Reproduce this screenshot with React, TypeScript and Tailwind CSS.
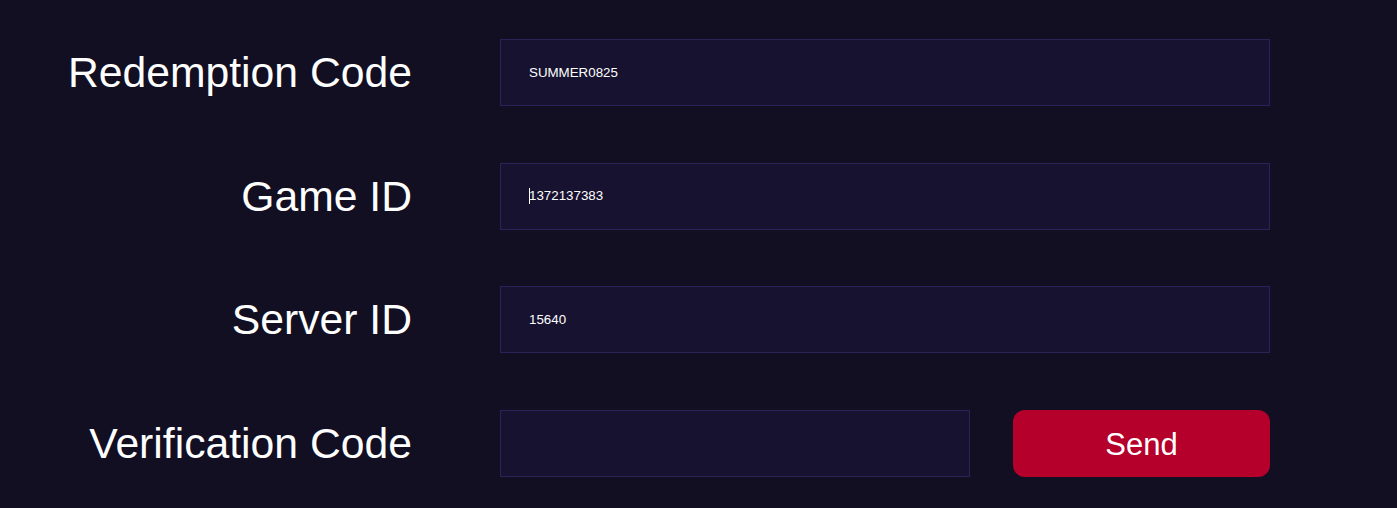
import React from "react";

const rows = [
  { label: "Redemption Code", value: "SUMMER0825" },
  { label: "Game ID", value: "1372137383", caret: true },
  { label: "Server ID", value: "15640" },
];

export default function App() {
  return (
    <div className="w-[1397px] h-[508px] bg-[#120f23] overflow-hidden" style={{ fontFamily: '"Liberation Sans", Arial, sans-serif' }}>
      <div className="pt-[39px] flex flex-col gap-[56.5px]">
        {rows.map((r) => (
          <div key={r.label} className="flex items-center h-[67px]">
            <div className="w-[412px] text-right text-white text-[42.7px] leading-none">{r.label}</div>
            <div className="ml-[88px] w-[770px] h-[67px] bg-[#17122f] border border-[#2a2258] flex items-center pl-[28px] text-white text-[13.33px]">
              {r.caret && <span className="inline-block w-px h-[16px] bg-white mr-[-1px]" />}
              {r.value}
            </div>
          </div>
        ))}
        <div className="flex items-center h-[67px]">
          <div className="w-[412px] text-right text-white text-[42.7px] leading-none">Verification Code</div>
          <div className="ml-[88px] w-[470px] h-[67px] bg-[#17122f] border border-[#2a2258]" />
          <button className="ml-[43px] w-[257px] h-[67px] bg-[#b4002a] rounded-[12px] text-white text-[31px] leading-none pt-[2px]">Send</button>
        </div>
      </div>
    </div>
  );
}
